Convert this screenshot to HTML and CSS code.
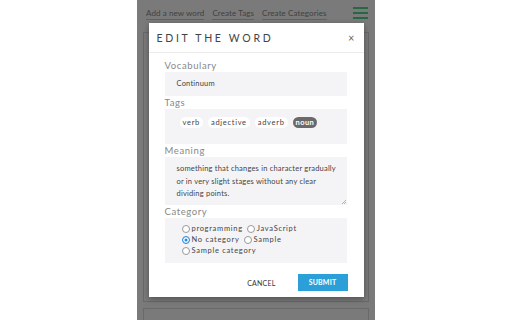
FILE: index.html
```html
<!DOCTYPE html>
<html>
<head>
<meta charset="utf-8">
<link rel="stylesheet" href="styles.css">
</head>
<body>
<div class="app">
  <nav class="nav">
    <a class="nav-link">Add a new word</a>
    <a class="nav-link">Create Tags</a>
    <a class="nav-link">Create Categories</a>
    <span class="burger"><i></i><i></i><i></i></span>
  </nav>
  <div class="card card-tall"></div>
  <div class="card"></div>

  <div class="overlay">
    <div class="modal">
      <div class="modal-head">
        <h2 class="modal-title">EDIT THE WORD</h2>
        <span class="close">×</span>
      </div>
      <div class="modal-body">
        <label class="label">Vocabulary</label>
        <div class="field field-input">Continuum</div>
        <label class="label">Tags</label>
        <div class="field field-tags">
          <span class="chip">verb</span>
          <span class="chip">adjective</span>
          <span class="chip">adverb</span>
          <span class="chip chip-on">noun</span>
        </div>
        <label class="label">Meaning</label>
        <div class="field field-text"><p class="meaning">something that changes in character gradually or in very slight stages without any clear dividing points.</p><svg class="grip" width="5" height="5" viewBox="0 0 5 5"><path d="M5 1L1 5M5 3L3 5" stroke="#999" stroke-width="0.7"/></svg></div>
        <label class="label">Category</label>
        <div class="field field-radios">
          <div class="radio-row"><span class="radio"><span class="dot"></span>programming</span><span class="radio"><span class="dot"></span>JavaScript</span></div>
          <div class="radio-row"><span class="radio"><span class="dot dot-on"></span>No category</span><span class="radio"><span class="dot"></span>Sample</span></div>
          <div class="radio-row"><span class="radio"><span class="dot"></span>Sample category</span></div>
        </div>
      </div>
      <div class="modal-foot">
        <span class="btn-cancel">CANCEL</span>
        <span class="btn-submit">SUBMIT</span>
      </div>
    </div>
  </div>
</div>
</body>
</html>
```
FILE: styles.css
```css
html, body {
  margin: 0;
  padding: 0;
  background: #ffffff;
  font-family: "Lato", "Open Sans", sans-serif;
}
.app {
  position: relative;
  width: 238px;
  height: 320px;
  margin: 0 auto;
  background: #ffffff;
  overflow: hidden;
}
.nav {
  display: flex;
  align-items: center;
  height: 26px;
  padding: 0 7px 0 9px;
  gap: 8px;
}
.nav-link {
  font-size: 8px;
  color: #8a8a8a;
  border-bottom: 1px solid #cfcfcf;
  padding-bottom: 1px;
  margin-top: 2px;
  letter-spacing: 0.1px;
}
.burger {
  margin-left: auto;
  display: flex;
  flex-direction: column;
  gap: 3px;
  margin-top: -1px;
}
.burger i {
  display: block;
  width: 15px;
  height: 2px;
  background: #52d98f;
}
.card {
  margin: 0 6px 6px;
  border: 1px solid #dcdcdc;
  height: 60px;
}
.card-tall {
  margin-top: 6px;
  height: 268px;
}
.overlay {
  position: absolute;
  inset: 0;
  background: rgba(0, 0, 0, 0.52);
  display: flex;
  justify-content: center;
  align-items: flex-start;
  padding-top: 23px;
}
.modal {
  width: 215px;
  height: 274px;
  background: #fff;
  box-shadow: 0 2px 6px rgba(0,0,0,0.35);
  display: flex;
  flex-direction: column;
}
.modal-head {
  display: flex;
  align-items: center;
  justify-content: space-between;
  height: 29px;
  padding: 0 9px 0 8px;
  border-bottom: 1px solid #ececec;
}
.modal-title {
  margin: 0;
  font-size: 10.5px;
  font-weight: 400;
  letter-spacing: 2.7px;
  color: #444;
}
.close {
  font-size: 11px;
  color: #666;
}
.modal-body {
  padding: 6px 17px 0 16px;
  display: flex;
  flex-direction: column;
}
.label {
  font-size: 9.5px;
  color: #888;
  letter-spacing: 0.6px;
  line-height: 13px;
  height: 13px;
}
.field {
  background: #f4f4f7;
  font-size: 7.5px;
  color: #444;
  letter-spacing: 0.2px;
  box-sizing: border-box;
}
.field-input {
  height: 24px;
  line-height: 24px;
  padding-left: 12px;
}
.field-tags {
  height: 35px;
  display: flex;
  align-items: flex-start;
  gap: 5px;
  padding: 8px 0 0 15px;
}
.chip {
  background: #fff;
  border-radius: 6px;
  padding: 0 3px;
  line-height: 11px;
  font-size: 7.5px;
  letter-spacing: 0.7px;
  color: #444;
}
.chip-on {
  background: #6a6a6a;
  color: #fff;
  font-weight: 700;
  letter-spacing: 0.4px;
}
.field-text {
  position: relative;
  height: 48px;
  padding: 6px 10px 0 12px;
}
.meaning {
  margin: 0;
  line-height: 12.5px;
}
.grip {
  position: absolute;
  right: 1px;
  bottom: 1px;
}
.field-radios {
  height: 45px;
  padding: 5px 0 0 17px;
  font-size: 7.5px;
  letter-spacing: 0.7px;
}
.radio-row {
  display: flex;
  gap: 4px;
  line-height: 11px;
}
.radio {
  display: flex;
  align-items: center;
  gap: 2px;
}
.dot {
  width: 6px;
  height: 6px;
  border: 1px solid #999;
  border-radius: 50%;
  background: #fff;
}
.dot-on {
  border-color: #1e88e5;
  background: #1e88e5;
  box-shadow: inset 0 0 0 1.5px #fff;
  background-clip: content-box;
}
.modal-foot {
  display: flex;
  align-items: center;
  justify-content: flex-end;
  padding: 11px 16px 0 0;
  gap: 22px;
}
.btn-cancel {
  font-size: 7px;
  color: #333;
  letter-spacing: 0.2px;
}
.btn-submit {
  width: 50px;
  height: 17px;
  line-height: 17px;
  text-align: center;
  background: #2a9fd8;
  color: #fff;
  font-size: 7px;
  font-weight: 700;
  letter-spacing: 0.2px;
}
```
